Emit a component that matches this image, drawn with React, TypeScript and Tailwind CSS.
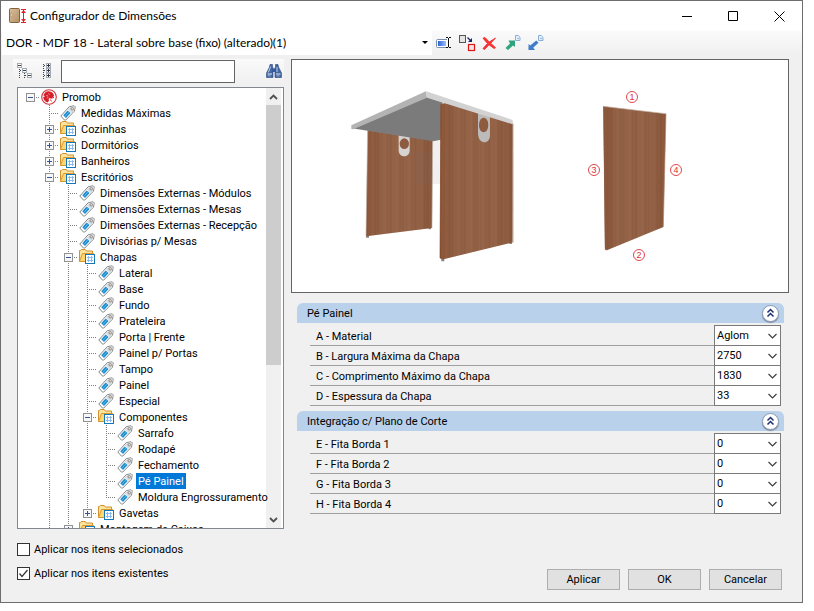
import React from 'react';

type IconKind = 'root' | 'folder' | 'tag';

interface TreeNode {
  label: string;
  level: number;
  icon: IconKind;
  // guide drawn in each column, left to right: '|' line, 't' tee, 'l' corner, '+' / '-' expander, ' ' empty
  guides: string;
  selected?: boolean;
}

const nodes: TreeNode[] = [
  { label: 'Promob', level: 0, icon: 'root', guides: 'r' },
  { label: 'Medidas Máximas', level: 1, icon: 'tag', guides: ' t' },
  { label: 'Cozinhas', level: 1, icon: 'folder', guides: ' +' },
  { label: 'Dormitórios', level: 1, icon: 'folder', guides: ' +' },
  { label: 'Banheiros', level: 1, icon: 'folder', guides: ' +' },
  { label: 'Escritórios', level: 1, icon: 'folder', guides: ' -' },
  { label: 'Dimensões Externas - Módulos', level: 2, icon: 'tag', guides: ' |t' },
  { label: 'Dimensões Externas - Mesas', level: 2, icon: 'tag', guides: ' |t' },
  { label: 'Dimensões Externas - Recepção', level: 2, icon: 'tag', guides: ' |t' },
  { label: 'Divisórias p/ Mesas', level: 2, icon: 'tag', guides: ' |t' },
  { label: 'Chapas', level: 2, icon: 'folder', guides: ' |-' },
  { label: 'Lateral', level: 3, icon: 'tag', guides: ' ||t' },
  { label: 'Base', level: 3, icon: 'tag', guides: ' ||t' },
  { label: 'Fundo', level: 3, icon: 'tag', guides: ' ||t' },
  { label: 'Prateleira', level: 3, icon: 'tag', guides: ' ||t' },
  { label: 'Porta | Frente', level: 3, icon: 'tag', guides: ' ||t' },
  { label: 'Painel p/ Portas', level: 3, icon: 'tag', guides: ' ||t' },
  { label: 'Tampo', level: 3, icon: 'tag', guides: ' ||t' },
  { label: 'Painel', level: 3, icon: 'tag', guides: ' ||t' },
  { label: 'Especial', level: 3, icon: 'tag', guides: ' ||t' },
  { label: 'Componentes', level: 3, icon: 'folder', guides: ' ||-' },
  { label: 'Sarrafo', level: 4, icon: 'tag', guides: ' |||t' },
  { label: 'Rodapé', level: 4, icon: 'tag', guides: ' |||t' },
  { label: 'Fechamento', level: 4, icon: 'tag', guides: ' |||t' },
  { label: 'Pé Painel', level: 4, icon: 'tag', guides: ' |||t', selected: true },
  { label: 'Moldura Engrossuramento', level: 4, icon: 'tag', guides: ' |||l' },
  { label: 'Gavetas', level: 3, icon: 'folder', guides: ' ||p' },
  { label: 'Montagem de Caixas', level: 2, icon: 'folder', guides: ' |+' },
];

const groups = [
  {
    title: 'Pé Painel',
    rows: [
      { id: 'material', label: 'A - Material', value: 'Aglom' },
      { id: 'largura', label: 'B - Largura Máxima da Chapa', value: '2750' },
      { id: 'comprimento', label: 'C - Comprimento Máximo da Chapa', value: '1830' },
      { id: 'espessura', label: 'D - Espessura da Chapa', value: '33' },
    ],
  },
  {
    title: 'Integração c/ Plano de Corte',
    rows: [
      { id: 'fita1', label: 'E - Fita Borda 1', value: '0' },
      { id: 'fita2', label: 'F - Fita Borda 2', value: '0' },
      { id: 'fita3', label: 'G - Fita Borda 3', value: '0' },
      { id: 'fita4', label: 'H - Fita Borda 4', value: '0' },
    ],
  },
];

/* ---------- icons ---------- */

const AppIcon = () => (
  <svg width="18" height="16" viewBox="0 0 18 16">
    <defs>
      <linearGradient id="door" x1="0" y1="0" x2="1" y2="1">
        <stop offset="0" stopColor="#d9c0a0" />
        <stop offset="1" stopColor="#b58f63" />
      </linearGradient>
    </defs>
    <rect x="1.500" y="0.500" width="10" height="14" rx="1" fill="url(#door)" stroke="#806444" />
    <rect x="3" y="5" width="1" height="4" fill="#f4f4f4" stroke="#a08b70" strokeWidth="0.400" />
    <path d="M13 1.500h5M13 14.500h5" stroke="#e0202c" strokeWidth="1" />
    <path d="M15.500 2v12" stroke="#e0202c" strokeWidth="1" />
    <path d="M13 5l2.500-3 2.500 3zM13 11l2.500 3 2.500-3z" fill="#e0202c" />
  </svg>
);

const RenameIcon = () => (
  <svg width="16" height="16" viewBox="0 0 16 16">
    <defs>
      <linearGradient id="field">
        <stop offset="0" stopColor="#2d64d8" />
        <stop offset="1" stopColor="#9cc0f5" />
      </linearGradient>
    </defs>
    <rect x="0.500" y="4.500" width="12" height="8" rx="1" fill="#fff" stroke="#7b8fb0" />
    <rect x="2" y="6" width="8" height="5" fill="url(#field)" />
    <path d="M12.500 3v9" stroke="#fff" strokeWidth="3" fill="none" />
    <path d="M10 2.500h2M13 2.500h2M10 12.500h2M13 12.500h2M12.500 3v9" stroke="#111" strokeWidth="1" fill="none" />
  </svg>
);

const ReplaceIcon = () => (
  <svg width="17" height="17" viewBox="0 0 17 17">
    <rect x="0.500" y="0.500" width="6" height="7" fill="#e4e4e4" stroke="#555" />
    <rect x="9.500" y="9.500" width="6" height="6" fill="#f0e4e4" stroke="#e21313" strokeWidth="1.200" />
    <path d="M8.500 2.500l3.500 3.500" stroke="#16246e" strokeWidth="1.300" />
    <path d="M13 3v4H9z" fill="#16246e" />
  </svg>
);

const DeleteIcon = () => (
  <svg width="15" height="15" viewBox="0 0 15 15">
    <path d="M1 2.200l2-.7L7.300 6 13.500 2 8.700 7.300l4.800 4.400-1.300.8L7 8.800 2.500 13.500 1 12.500 5.500 7.500z" fill="#f33" stroke="#e62222" strokeWidth="0.800" />
  </svg>
);

const TransferIcon = ({ color, down = false }: { color: string; down?: boolean }) => (
  <svg width="16" height="16" viewBox="0 0 16 16">
    <path d="M10.500.500h2.700l1.800 1.800v3.200h-4.500z" fill="#e6f0fb" stroke="#88aedb" strokeWidth="1" />
    <path d="M12 3.500h2" stroke="#88aedb" strokeWidth="0.800" />
    {down ? (
      <path d="M.5 15V9l1.700 1.500L8.300 5.500l2.200 2.200-5.300 5 1.800 2.300z" fill={color} />
    ) : (
      <path d="M.5 13L5 8.500 3.500 5.500H10v6.500L8 10.500 3 15z" fill={color} />
    )}
  </svg>
);

const CollapseTreeIcon = () => (
  <svg width="16" height="16" viewBox="0 0 16 16" fill="none" shapeRendering="crispEdges">
    <path d="M2.500 6v10M2.500 7.500h4M7.500 10v5M7.500 12.500h4" stroke="#444" strokeDasharray="1 1" />
    <rect x="0.500" y="0.500" width="4" height="4" fill="#fff" stroke="#a3abb8" />
    <rect x="5.500" y="5.500" width="4" height="4" fill="#fff" stroke="#a3abb8" />
    <rect x="10.500" y="10.500" width="4" height="4" fill="#fff" stroke="#a3abb8" />
    <path d="M1 2.500h3M6 7.500h3M11 12.500h3" stroke="#444" />
  </svg>
);

const ExpandTreeIcon = () => (
  <svg width="9" height="16" viewBox="0 0 9 16" fill="none" shapeRendering="crispEdges">
    <path d="M.5 1v15M1 2.500h3M1 7.500h3M1 12.500h3" stroke="#444" strokeDasharray="1 1" />
    <rect x="3.500" y="0.500" width="4" height="4" fill="#fff" stroke="#a3abb8" />
    <rect x="3.500" y="5.500" width="4" height="4" fill="#fff" stroke="#a3abb8" />
    <rect x="3.500" y="10.500" width="4" height="4" fill="#fff" stroke="#a3abb8" />
    <path d="M4 2.500h3M4 7.500h3M4 12.500h3M5.500 1v3M5.500 6v3M5.500 11v3" stroke="#333" />
  </svg>
);

const BinocularsIcon = () => (
  <svg width="16" height="14" viewBox="0 0 16 14">
    <path d="M4 .5h2.500v2L7 4v9.500H.5V9L3.500 3zM12 .5H9.500v2L9 4v9.500h6.500V9L12.500 3z" fill="#44679f" stroke="#274680" strokeWidth="0.600" />
    <rect x="6.500" y="4.500" width="3" height="3.500" fill="#34599c" />
    <path d="M4.700 2.500L2.300 8.500M11 3v5" stroke="#b8cdef" strokeWidth="1" />
    <path d="M1.500 10h4.500M10 10h4.500" stroke="#dfe9f8" strokeWidth="1" />
    <path d="M1.700 11.800h3M10.500 11.800h3" stroke="#8fadd9" strokeWidth="1" />
  </svg>
);

const RootIcon = () => (
  <svg width="16" height="16" viewBox="0 0 16 16">
    <circle cx="8" cy="8" r="7.300" fill="#fff" stroke="#d5303a" strokeWidth="1.100" />
    <path d="M7.800 2.200C5 2 3 4 2.400 6.500l1.800.8-2 .8c0 2.500 2 4.800 4.500 5.400l1.300-1.800-.4-1.700 1.200-1 1.700.3 2.600-2.300c-.3-2.500-2.300-4.700-5.300-4.800z" fill="#d5202c" />
    <path d="M9.500 9.200l3.500-.7M9 10.500l1.800 1.700" stroke="#d5202c" strokeWidth="1" />
    <path d="M5.200 6.500l1.800.5M7.800 4.300l.5 1.500M6 9l1.500-.8" stroke="#f7c5c8" strokeWidth="0.700" />
  </svg>
);

const FolderIcon = () => (
  <svg width="16" height="16" viewBox="0 0 16 16">
    <path d="M.5 12.500V1.500h1l.8-1h4l1 1.500h6.200v3" fill="#fbe3a0" stroke="#d3912c" />
    <path d="M.5 12.500L3.500 4.500h11v8z" fill="#ffd873" stroke="#d9982f" />
    <rect x="6.500" y="5.500" width="9" height="9" fill="#fff" stroke="#1478b8" />
    <path d="M8 8.500h6M8 11.500h6M9.500 7v6M12.500 7v6" stroke="#8cbcec" strokeWidth="1" />
  </svg>
);

const TagIcon = () => (
  <svg width="16" height="16" viewBox="0 0 16 16">
    <path d="M.8 11L9.300 1.600l4.900-.8 1 1-.7 4.300-8.800 9H4.500z" fill="#fff" stroke="#858585" strokeWidth="1" />
    <path d="M9.600 2.300l4.200-.8.700.700-.6 3.700-2.200 2.200-4.200-3.500z" fill="#dcdcdc" />
    <path d="M3.200 10.300l4.400-4.900 3 2.700-4.600 4.900z" fill="#1c8fd2" />
    <path d="M4.800 11.400l4.200-4.600" stroke="#6cc0ee" strokeWidth="0.800" />
    <circle cx="12.200" cy="3.800" r="1.200" fill="#fff" stroke="#777" strokeWidth="0.900" />
  </svg>
);

const Chevron = ({ up = false }: { up?: boolean }) => (
  <svg width="9" height="6" viewBox="0 0 9 6" fill="none">
    <path d={up ? 'M1 5l3.500-3.500L8 5' : 'M1 1l3.500 3.500L8 1'} stroke="#505050" strokeWidth="1.800" />
  </svg>
);

/* ---------- tree ---------- */

const Guide = ({ kind }: { kind: string }) => {
  const box = kind === '+' || kind === '-' || kind === 'r' || kind === 'p';
  const line = (
    <svg width="19" height="16" viewBox="0 0 19 16" fill="none" shapeRendering="crispEdges">
      {'|t+-'.includes(kind) && <path d="M9.500 0v16" stroke="#808080" strokeDasharray="1 1" />}
      {(kind === 'l' || kind === 'p') && <path d="M9.500 0v8" stroke="#808080" strokeDasharray="1 1" />}
      {'tl+-rp'.includes(kind) && <path d="M9 8.500h10" stroke="#808080" strokeDasharray="1 1" />}
      {box && (
        <>
          <rect x="5.500" y="4.500" width="8" height="8" fill="#f7f7f7" stroke="#919191" />
          <path d="M7 8.500h5" stroke="#35539a" />
          {(kind === '+' || kind === 'p') && <path d="M9.500 6v5" stroke="#35539a" />}
        </>
      )}
    </svg>
  );
  if (kind === ' ') return <span className="w-[19px] shrink-0" />;
  return box ? (
    <button type="button" aria-label={kind === '+' || kind === 'p' ? 'Expandir' : 'Recolher'} className="w-[19px] shrink-0">
      {line}
    </button>
  ) : (
    <span className="w-[19px] shrink-0">{line}</span>
  );
};

const TreeRow = ({ node }: { node: TreeNode }) => (
  <li role="treeitem" aria-level={node.level + 1} aria-selected={!!node.selected} className="flex h-4 items-center whitespace-nowrap">
    {node.guides.split('').map((kind, i) => (
      <Guide key={i} kind={kind} />
    ))}
    <span className="flex w-5 shrink-0 pl-px">
      {node.icon === 'root' && <RootIcon />}
      {node.icon === 'folder' && <FolderIcon />}
      {node.icon === 'tag' && <TagIcon />}
    </span>
    <span className={node.selected ? 'h-4 bg-[#0078d7] px-0.5 pt-px text-white' : 'h-4 px-0.5 pt-px'}>{node.label}</span>
  </li>
);

const Tree = () => (
  <div className="ml-4 flex min-h-0 flex-1 border border-[#828790] bg-white">
    <ul role="tree" className="z-10 min-w-0 flex-1 overflow-x-visible overflow-y-clip pt-px pl-[3px]">
      {nodes.map((node) => (
        <TreeRow key={node.label} node={node} />
      ))}
    </ul>
    <div className="mr-0.5 flex w-[15px] flex-col bg-[#f0f0f0]">
      <button type="button" aria-label="Rolar para cima" className="flex h-[17px] items-center justify-center">
        <Chevron up />
      </button>
      <div className="flex-1">
        <div className="h-[64%] bg-[#cdcdcd]" />
      </div>
      <button type="button" aria-label="Rolar para baixo" className="flex h-[17px] items-center justify-center">
        <Chevron />
      </button>
    </div>
  </div>
);

/* ---------- preview ---------- */

const Preview = () => (
  <div className="h-[234px] border border-[#646464] bg-white">
    <svg className="h-full w-full" viewBox="292 60 496 232">
      <defs>
        <pattern id="wood" width="74" height="700" patternUnits="userSpaceOnUse">
          <rect width="74" height="700" fill="#8f5f44" />
          <rect x="4" width="5" height="700" fill="#875940" />
          <rect x="13" width="2" height="700" fill="#99694c" />
          <rect x="20" width="9" height="700" fill="#94644a" />
          <rect x="33" width="1.500" height="700" fill="#7f523a" />
          <rect x="40" width="6" height="700" fill="#8a5b41" />
          <rect x="49" width="1.500" height="700" fill="#9a6b4e" />
          <rect x="56" width="10" height="700" fill="#93634a" />
          <rect x="69" width="1.500" height="700" fill="#82543c" />
        </pattern>
        <linearGradient id="shade">
          <stop offset="0" stopColor="#7a3f20" stopOpacity="0.350" />
          <stop offset="0.300" stopColor="#a06a48" stopOpacity="0.200" />
          <stop offset="0.700" stopColor="#a06a48" stopOpacity="0.200" />
          <stop offset="1" stopColor="#7a3f20" stopOpacity="0.300" />
        </linearGradient>
      </defs>
      <g transform="translate(290 55) scale(.3333)">
        <path d="M428 255h26v132h-26z" fill="#f0f0f0" />
        <path d="M228 540h9v8h-9zM416 516h7v7h-7zM454 610h9v9h-9zM658 560h8v7h-8z" fill="#8b8580" />
        <path d="M233 226L428 256 426 519 228 544z" fill="url(#wood)" />
        <path d="M233 226L428 256 426 519 228 544z" fill="url(#shade)" />
        <path d="M233 226L228 544M428 258L426 519" stroke="#c9b8ac" strokeWidth="2" />
        <path d="M375 290h52v97h-52z" fill="#777" fillOpacity="0.120" />
        <path d="M326 240h33v46c0 24-33 24-33 0z" fill="#d6d4d2" />
        <ellipse cx="343" cy="266" rx="14" ry="16" fill="#8d5b40" />
        <path d="M186 220L410 126 458 142 452 254 430 259z" fill="#7b7b7b" />
        <path d="M184 211L408 109 411 128 190 223 184 222z" fill="#b3b3b3" />
        <path d="M452 148L480 140 669 207 668 562 460 613 450 609z" fill="url(#wood)" />
        <path d="M452 148L480 140 669 207 668 562 460 613 450 609z" fill="url(#shade)" />
        <path d="M453 148L450 609 460 613" stroke="#8a4c2e" strokeWidth="2" fill="none" />
        <path d="M669 205v358" stroke="#b9a496" strokeWidth="3" />
        <path d="M564 172l36 10v58c0 30-36 30-36-6z" fill="#bdbbb9" />
        <ellipse cx="581" cy="210" rx="14" ry="22" fill="#8d5b40" />
        <path d="M408 109L668 195 669 208 411 128z" fill="#d2d2d2" />
      </g>
      <g transform="translate(560 55) scale(.3333)">
        <path d="M130 154L318 176 310 516 142 585 135 583z" fill="url(#wood)" />
        <path d="M130 154L318 176 310 516 142 585 135 583z" fill="url(#shade)" />
        <path d="M130 154L318 176" stroke="#cdbcb0" strokeWidth="2" />
        <path d="M131 155L136 584 142 585" stroke="#86593f" strokeWidth="2" fill="none" />
        <path d="M318 176L310 516" stroke="#b08e79" strokeWidth="2" />
      </g>
      <g fill="none" stroke="#e0474c" strokeWidth="1">
        <circle cx="632" cy="97" r="5.500" />
        <circle cx="639" cy="255" r="5.500" />
        <circle cx="594" cy="170" r="5.500" />
        <circle cx="676" cy="170" r="5.500" />
      </g>
      <g fill="#dc2f35" fontSize="9" fontFamily="Liberation Sans, sans-serif" textAnchor="middle">
        <text x="632" y="100">1</text>
        <text x="639" y="258">2</text>
        <text x="594" y="173">3</text>
        <text x="676" y="173">4</text>
      </g>
    </svg>
  </div>
);

/* ---------- properties ---------- */

const PropertyGroup = ({ title, rows }: (typeof groups)[number]) => (
  <section>
    <header className="flex h-5 items-center justify-between rounded-t-md bg-[#b9d1ea] pr-[5px] pl-2.5">
      <h2 className="pt-px">{title}</h2>
      <button
        type="button"
        aria-label="Recolher grupo"
        className="flex size-[17px] items-center justify-center rounded-full border border-[#8e9bb5] bg-white shadow-[0_1px_1px_#7d879c]"
      >
        <svg width="9" height="10" viewBox="0 0 9 10" fill="none">
          <path d="M1.500 4.500l3-3 3 3M1.500 8.500l3-3 3 3" stroke="#1d2f6f" strokeWidth="1.500" />
        </svg>
      </button>
    </header>
    <div className="mt-0.5 mr-[3px] ml-[13px] border-t border-transparent">
      {rows.map((row) => (
        <div key={row.id} className="flex h-5">
          <label htmlFor={row.id} className="flex flex-1 items-center border-b border-[#a0a0a0] pt-0.5 pl-1.5">
            {row.label}
          </label>
          <div className="relative -mt-px w-[67px]">
            <select id={row.id} defaultValue={row.value} className="block h-[21px] w-full appearance-none border border-[#7a7a7a] bg-white pl-0.5 outline-none">
              <option>{row.value}</option>
            </select>
            <span className="pointer-events-none absolute top-2 right-1">
              <svg width="9" height="6" viewBox="0 0 9 6" fill="none">
                <path d="M.5 1l4 4 4-4" stroke="#404040" strokeWidth="1.200" />
              </svg>
            </span>
          </div>
        </div>
      ))}
    </div>
  </section>
);

/* ---------- window ---------- */

const TitleBar = () => (
  <div className="flex h-[30px] shrink-0 items-center bg-white pl-[7px]">
    <AppIcon />
    <h1 className="ml-1 flex-1 font-[Lato,sans-serif] text-[12px]">Configurador de Dimensões</h1>
    <button type="button" aria-label="Minimizar" className="flex h-full w-[46px] items-center justify-center">
      <svg width="11" height="11" viewBox="0 0 11 11"><path d="M0 5.500h10" stroke="#000" /></svg>
    </button>
    <button type="button" aria-label="Maximizar" className="flex h-full w-[46px] items-center justify-center">
      <svg width="11" height="11" viewBox="0 0 11 11"><path d="M.5.500h9v9h-9z" fill="none" stroke="#000" /></svg>
    </button>
    <button type="button" aria-label="Fechar" className="flex h-full w-[46px] items-center justify-center">
      <svg width="11" height="11" viewBox="0 0 11 11"><path d="M.5.500l10 10M10.500.500l-10 10" stroke="#000" /></svg>
    </button>
  </div>
);

const Toolbar = () => (
  <div className="flex h-6 shrink-0 items-center bg-linear-to-b from-[#fafafa] to-[#f0f0f0]">
    <div className="relative ml-px w-[430px]">
      <select aria-label="Configuração" className="block h-6 w-full appearance-none bg-white pl-1 font-[Lato,sans-serif] text-[12px] outline-none">
        <option>DOR - MDF 18 - Lateral sobre base (fixo) (alterado)(1)</option>
      </select>
      <span className="pointer-events-none absolute top-2.5 right-1 border-x-3 border-t-3 border-x-transparent border-t-black" />
    </div>
    <button type="button" aria-label="Renomear" className="ml-1 flex w-[23px]"><RenameIcon /></button>
    <button type="button" aria-label="Substituir" className="flex w-[23px]"><ReplaceIcon /></button>
    <button type="button" aria-label="Excluir" className="flex w-[23px]"><DeleteIcon /></button>
    <button type="button" aria-label="Exportar" className="flex w-[23px]"><TransferIcon color="#2fa37c" /></button>
    <button type="button" aria-label="Importar" className="flex w-[23px]"><TransferIcon color="#3f7dcb" down /></button>
  </div>
);

const DialogButton = ({ children }: { children: React.ReactNode }) => (
  <button type="button" className="h-[21px] w-[73px] border border-[#adadad] bg-[#e1e1e1]">
    {children}
  </button>
);

const CheckOption = ({ label, checked = false }: { label: string; checked?: boolean }) => (
  <label className="flex h-6 items-center gap-1">
    <span className="relative flex">
      <input type="checkbox" defaultChecked={checked} className="peer size-[13px] appearance-none border border-[#333] bg-white" />
      <svg className="pointer-events-none absolute top-0 left-0 hidden peer-checked:block" width="13" height="13" viewBox="0 0 13 13" fill="none">
        <path d="M2.500 6.500l2.500 3 5.500-6.500" stroke="#333" strokeWidth="1.200" />
      </svg>
    </span>
    <span className="pt-px">{label}</span>
  </label>
);

export default function App() {
  return (
    <div className="h-screen bg-white pr-[11px] pb-2 font-[Roboto,'Liberation_Sans',sans-serif] text-[11px] leading-4 text-black">
      <div className="flex h-full flex-col border border-[#6d6d70] bg-[#f0f0f0]">
        <TitleBar />
        <Toolbar />
        <main className="mt-1 flex min-h-0 flex-1">
          <div className="flex w-[283px] shrink-0 flex-col">
            <div className="mb-1 ml-3 flex h-6 items-center bg-linear-to-b from-[#fafafa] to-[#f0f0f0] pl-1">
              <button type="button" aria-label="Recolher tudo"><CollapseTreeIcon /></button>
              <button type="button" aria-label="Expandir tudo" className="ml-2.5"><ExpandTreeIcon /></button>
              <input type="text" aria-label="Pesquisar" className="ml-[9px] h-[23px] w-[174px] border border-[#646464] bg-white px-1 outline-none" />
              <button type="button" aria-label="Localizar" className="mr-0.5 ml-auto"><BinocularsIcon /></button>
            </div>
            <Tree />
          </div>
          <div className="mr-[13px] ml-[7px] min-w-0 flex-1">
            <Preview />
            <div className="mt-2.5 mr-[5px] ml-1.5 flex flex-col gap-[5px]">
              {groups.map((group) => (
                <PropertyGroup key={group.title} {...group} />
              ))}
            </div>
          </div>
        </main>
        <footer className="flex shrink-0 items-end justify-between pt-2 pr-5 pb-3 pl-4">
          <div className="mb-[5px]">
            <CheckOption label="Aplicar nos itens selecionados" />
            <CheckOption label="Aplicar nos itens existentes" checked />
          </div>
          <div className="flex gap-2">
            <DialogButton>Aplicar</DialogButton>
            <DialogButton>OK</DialogButton>
            <DialogButton>Cancelar</DialogButton>
          </div>
        </footer>
      </div>
    </div>
  );
}
